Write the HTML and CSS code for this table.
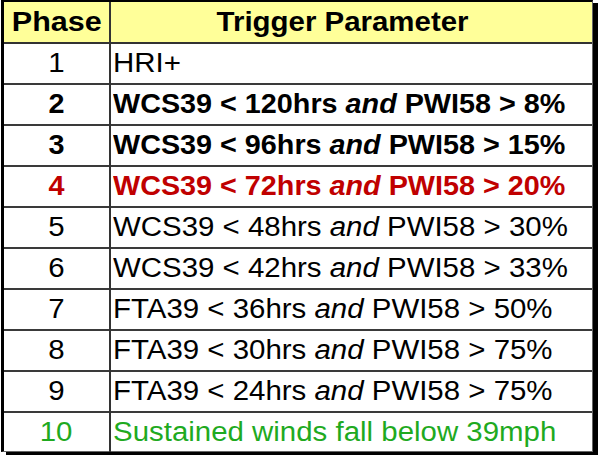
FILE: index.html
```html
<!DOCTYPE html>
<html>
<head>
<meta charset="utf-8">
<link rel="stylesheet" href="styles.css">
</head>
<body>
<div class="frame">
<table class="grid">
  <thead>
    <tr><th class="ph"><span class="w">Phase</span></th><th class="tp"><span class="w">Trigger Parameter</span></th></tr>
  </thead>
  <tbody>
    <tr><td class="num"><span class="w">1</span></td><td class="txt"><span class="w">HRI+</span></td></tr>
    <tr class="bold"><td class="num"><span class="w">2</span></td><td class="txt"><span class="w">WCS39 &lt; 120hrs <i>and</i> PWI58 &gt; 8%</span></td></tr>
    <tr class="bold"><td class="num"><span class="w">3</span></td><td class="txt"><span class="w">WCS39 &lt; 96hrs <i>and</i> PWI58 &gt; 15%</span></td></tr>
    <tr class="bold red"><td class="num"><span class="w">4</span></td><td class="txt"><span class="w">WCS39 &lt; 72hrs <i>and</i> PWI58 &gt; 20%</span></td></tr>
    <tr><td class="num"><span class="w">5</span></td><td class="txt"><span class="w">WCS39 &lt; 48hrs <i>and</i> PWI58 &gt; 30%</span></td></tr>
    <tr><td class="num"><span class="w">6</span></td><td class="txt"><span class="w">WCS39 &lt; 42hrs <i>and</i> PWI58 &gt; 33%</span></td></tr>
    <tr><td class="num"><span class="w">7</span></td><td class="txt"><span class="w">FTA39 &lt; 36hrs <i>and</i> PWI58 &gt; 50%</span></td></tr>
    <tr><td class="num"><span class="w">8</span></td><td class="txt"><span class="w">FTA39 &lt; 30hrs <i>and</i> PWI58 &gt; 75%</span></td></tr>
    <tr><td class="num"><span class="w">9</span></td><td class="txt"><span class="w">FTA39 &lt; 24hrs <i>and</i> PWI58 &gt; 75%</span></td></tr>
    <tr class="green"><td class="num"><span class="w">10</span></td><td class="txt"><span class="w">Sustained winds fall below 39mph</span></td></tr>
  </tbody>
</table>
</div>
</body>
</html>
```
FILE: styles.css
```css
html, body {
  margin: 0;
  padding: 0;
  background: #ffffff;
}
body {
  width: 598px;
  height: 457px;
  overflow: hidden;
  font-family: "Liberation Sans", Arial, sans-serif;
}
.frame {
  margin-left: 1px;
  width: 592px;
  height: 452px;
  border-top: 2px solid #000;
  border-left: 3px solid #000;
  box-sizing: border-box;
  box-shadow: 5px 3px 0 #000;
  border-right: 1px solid #666;
  border-bottom: 1px solid #666;
}
.grid {
  width: 100%;
  height: 100%;
  border-collapse: collapse;
  table-layout: fixed;
}
.grid th, .grid td {
  padding: 0;
  font-size: 27px;
  color: #000;
  white-space: nowrap;
}
.w {
  display: inline-block;
  transform: scaleX(1.09);
  transform-origin: center;
}
.txt .w {
  transform-origin: left center;
}
.bold .w {
  transform: scaleX(1.065);
}
.ph .w {
  transform: scaleX(1.13);
}
.grid th {
  background: #ffff99;
  font-weight: bold;
  height: 40px;
  border-bottom: 2px solid #333;
  text-align: center;
}
.grid th.ph {
  width: 105px;
  border-right: 2px solid #333;
}
.grid th.tp {
  padding-right: 18px;
}
.grid td {
  height: 39px;
  border-top: 2px solid #3a3a3a;
}
.grid tbody tr:first-child td {
  border-top: none;
}
.grid td.num {
  text-align: center;
  border-right: 2px solid #333;
}
.grid td.txt {
  text-align: left;
  padding-left: 2px;
}
.bold td {
  font-weight: bold;
}
.red td {
  color: #c00000;
}
.green td {
  color: #1faa1f;
}
```
